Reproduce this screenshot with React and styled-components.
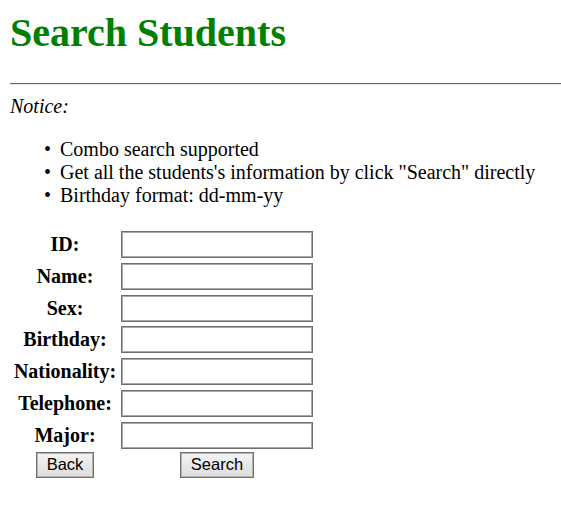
import React from "react";
import styled, { createGlobalStyle } from "styled-components";

const GlobalStyle = createGlobalStyle`
  html, body {
    margin: 0;
    padding: 0;
    background: #ffffff;
  }
  body {
    padding: 10px 0 0 10px;
    font-family: "Liberation Serif", "Times New Roman", serif;
    font-size: 20px;
    color: #000;
  }
`;

const Page = styled.div`
  display: flex;
  flex-direction: column;
`;

const Title = styled.h1`
  margin: 0 0 27px;
  font-size: 40px;
  font-weight: bold;
  color: #008000;
  line-height: 46px;
`;

const Rule = styled.hr`
  margin: 0 0 10px;
  height: 0;
  border: none;
  border-top: 1px solid #696969;
  border-bottom: 1px solid #e6e6e6;
`;

const Notice = styled.em`
  display: block;
  line-height: 23px;
`;

const List = styled.ul`
  margin: 20px 0 24px;
  padding-left: 50px;
  line-height: 23px;
`;

const Item = styled.li`
  list-style: none;
  position: relative;

  &::before {
    content: "•";
    position: absolute;
    left: -16px;
  }
`;

const Form = styled.div`
  display: grid;
  grid-template-columns: 110px 192px;
  column-gap: 1px;
  row-gap: 4.8px;
  align-items: center;
`;

const Label = styled.label`
  font-weight: bold;
  text-align: center;
  line-height: 23px;
`;

const Field = styled.input`
  box-sizing: border-box;
  width: 192px;
  height: 27px;
  margin: 0;
  border: 1px solid #6f6f6f;
  box-shadow: inset 0 0 0 1px #a8a8a8;
  background: #fff;
  outline: none;
`;

const Button = styled.button`
  justify-self: center;
  align-self: start;
  margin-top: -2px;
  height: 26px;
  padding: 0 10px;
  font-family: "Liberation Sans", Arial, sans-serif;
  font-size: 16.5px;
  color: #000;
  border: 1px solid #6f6f6f;
  box-shadow: inset 0 0 0 1px #b4b4b4;
  background: linear-gradient(#f4f4f4, #dcdcdc);
  border-radius: 0;
`;

const fields = ["ID", "Name", "Sex", "Birthday", "Nationality", "Telephone", "Major"];

export default function App() {
  return (
    <Page>
      <GlobalStyle />
      <Title>Search Students</Title>
      <Rule />
      <Notice>Notice:</Notice>
      <List>
        <Item>Combo search supported</Item>
        <Item>Get all the students's information by click "Search" directly</Item>
        <Item>Birthday format: dd-mm-yy</Item>
      </List>
      <Form>
        {fields.map((f) => (
          <React.Fragment key={f}>
            <Label>{f}:</Label>
            <Field type="text" />
          </React.Fragment>
        ))}
        <Button>Back</Button>
        <Button>Search</Button>
      </Form>
    </Page>
  );
}
